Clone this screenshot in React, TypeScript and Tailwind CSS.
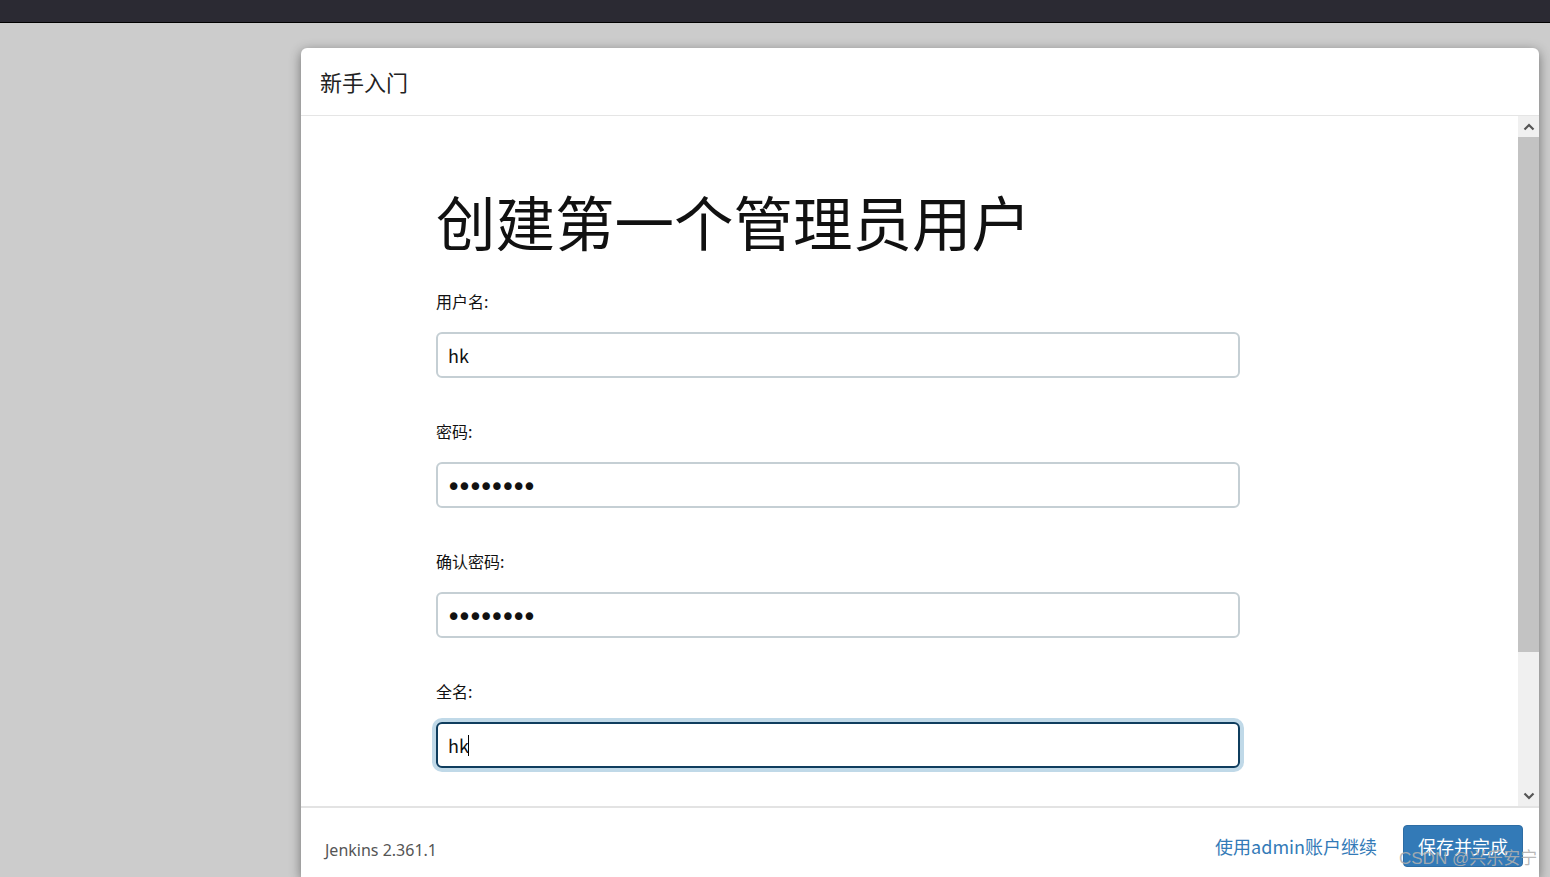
import { useState } from 'react';

const cjk = "font-['Microsoft_YaHei','Noto_Sans_CJK_SC',sans-serif]";

interface FieldProps {
  label: string;
  value: string;
  type?: string;
  focused?: boolean;
}

function Field({ label, value, type = 'text', focused = false }: FieldProps) {
  const [text, setText] = useState(value);
  const secret = type === 'password';
  return (
    <div className="mb-[42px]">
      <label className="block h-[22px] text-[16px] leading-[22px] text-[#111]">{label}</label>
      <div className="relative mt-[20px] w-[804px]">
        <input
          type={type}
          value={text}
          onChange={(event) => setText(event.target.value)}
          className={
            focused
              ? 'block h-[46px] w-full rounded-[6px] border-2 border-[#0f3d5e] bg-white px-[10px] text-[18px] text-[#111] outline-none ring-4 ring-[#c0d9e8]'
              : secret
                ? "block h-[46px] w-full rounded-[6px] border-2 border-[#c5cfd4] bg-white px-[8px] pt-[3px] font-['DejaVu_Sans',sans-serif] text-[26px] tracking-[-4.5px] text-[#111] outline-none"
                : 'block h-[46px] w-full rounded-[6px] border-2 border-[#c5cfd4] bg-white px-[10px] text-[18px] text-[#111] outline-none'
          }
        />
        {focused ? <span className="absolute left-[32px] top-[13px] h-[21px] w-px bg-black" /> : null}
      </div>
    </div>
  );
}

function Chevron({ up }: { up?: boolean }) {
  return (
    <svg width="12" height="8" viewBox="0 0 12 8">
      <polyline
        points={up ? '1.5,6.5 6,2 10.5,6.5' : '1.5,1.5 6,6 10.5,1.5'}
        fill="none"
        stroke="#555"
        strokeWidth="2.2"
      />
    </svg>
  );
}

export default function App() {
  return (
    <div className={`relative flex h-[877px] w-[1550px] flex-col overflow-hidden bg-[#cccccc] ${cjk}`}>
      <div className="h-[23px] shrink-0 border-b border-black bg-[#2b2a33]" />

      <div className="flex min-h-0 flex-1 pl-[301px] pt-[25px]">
        <div className="flex w-[1238px] flex-col overflow-hidden rounded-t-[6px] bg-white shadow-[0_3px_12px_rgba(0,0,0,0.45)]">
          <div className="flex h-[68px] shrink-0 items-center border-b border-[#e5e5e5] pl-[19px]">
            <h4 className="text-[22px] text-[#222]">新手入门</h4>
          </div>

          <div className="flex h-[690px] shrink-0">
            <div className="min-w-0 flex-1 overflow-hidden pl-[135px] pt-[71px]">
              <h1 className="mb-[37px] text-[59.5px] leading-[66px] text-[#111]">创建第一个管理员用户</h1>
              <Field label="用户名:" value="hk" />
              <Field label="密码:" value="12345678" type="password" />
              <Field label="确认密码:" value="12345678" type="password" />
              <Field label="全名:" value="hk" focused />
            </div>
            <div className="flex w-[21px] shrink-0 flex-col bg-[#f0f0f0]">
              <div className="flex h-[21px] items-center justify-center">
                <Chevron up />
              </div>
              <div className="h-[515px] bg-[#c3c3c3]" />
              <div className="flex-1" />
              <div className="flex h-[21px] items-center justify-center">
                <Chevron />
              </div>
            </div>
          </div>

          <div className="flex flex-1 items-start justify-between border-t-2 border-[#e3e3e3] pl-[24px] pr-[16px] pt-[17px]">
            <span className="mt-[13px] font-['Noto_Sans',sans-serif] text-[16px] text-[#555]">Jenkins 2.361.1</span>
            <div className="flex items-center gap-[26px]">
              <a className="text-[18px] text-[#337ab7]">使用admin账户继续</a>
              <button className="h-[42px] w-[120px] rounded-[4px] border border-[#2e6da4] bg-[#337ab7] text-[18px] text-white">
                保存并完成
              </button>
            </div>
          </div>
        </div>
      </div>

      <div className="pointer-events-none absolute left-[1399px] top-[846px] font-['Liberation_Sans','Noto_Sans_CJK_SC',sans-serif] text-[17px] text-[rgba(175,175,175,0.9)]">
        CSDN @兴乐安宁
      </div>
    </div>
  );
}
